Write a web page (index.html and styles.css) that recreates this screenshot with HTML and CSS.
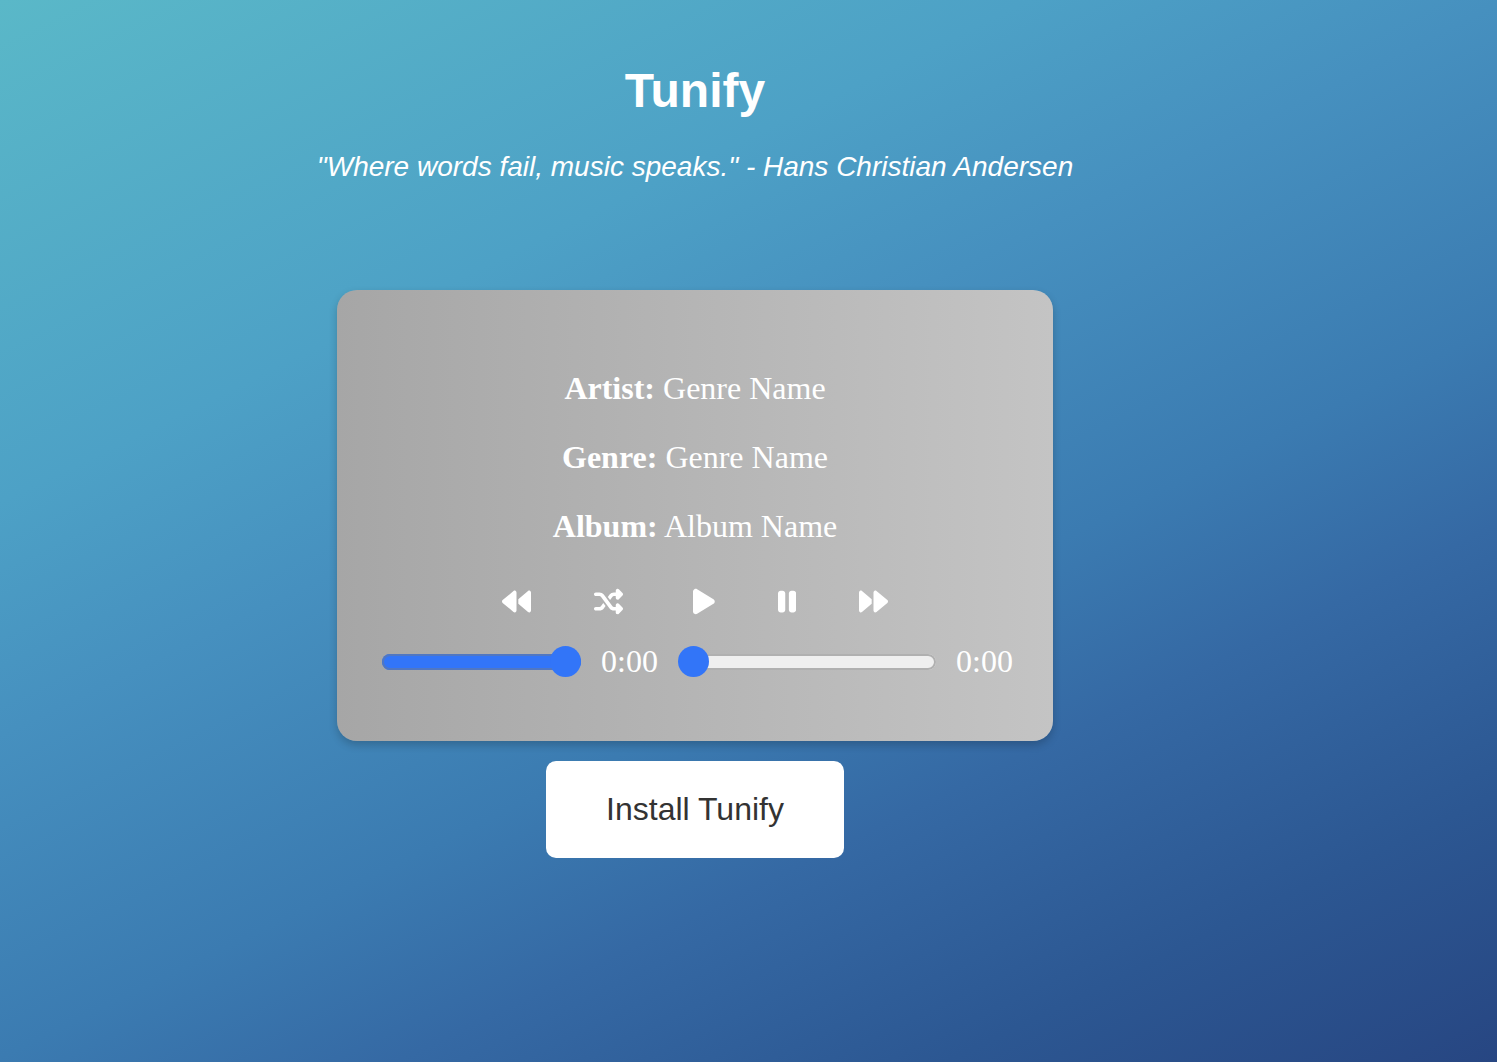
FILE: index.html
```html
<!DOCTYPE html>
<html lang="en">
<head>
<meta charset="utf-8">
<meta name="viewport" content="width=device-width, initial-scale=1">
<title>Tunify</title>
<link rel="stylesheet" href="styles.css">
</head>
<body>
<main class="page">
  <header class="intro">
    <h1 class="title">Tunify</h1>
    <p class="quote">"Where words fail, music speaks." - Hans Christian Andersen</p>
  </header>
  <section class="player" aria-label="Music player">
    <div class="details">
      <p class="detail"><strong>Artist:</strong> Genre Name</p>
      <p class="detail"><strong>Genre:</strong> Genre Name</p>
      <p class="detail"><strong>Album:</strong> Album Name</p>
    </div>
    <div class="controls">
      <div class="control-group">
        <button class="control" type="button" aria-label="Previous"><svg class="icon" viewBox="0 0 512 512"><path d="M459.5 440.6c9.5 7.9 22.8 9.7 34.1 4.4s18.4-16.6 18.4-29V96c0-12.4-7.2-23.7-18.4-29s-24.5-3.6-34.1 4.4L288 214.3V256v41.7L459.5 440.6zM256 352V256 128 96c0-12.4-7.2-23.7-18.4-29s-24.5-3.6-34.1 4.4l-192 160C4.2 237.5 0 246.5 0 256s4.2 18.5 11.5 24.6l192 160c9.5 7.9 22.8 9.7 34.1 4.4s18.4-16.6 18.4-29V352z"/></svg></button>
        <button class="control" type="button" aria-label="Shuffle"><svg class="icon" viewBox="0 0 512 512"><path d="M403.8 34.4c12-5 25.7-2.2 34.9 6.9l64 64c6 6 9.4 14.1 9.4 22.6s-3.4 16.6-9.4 22.6l-64 64c-9.2 9.2-22.9 11.9-34.9 6.9s-19.8-16.6-19.8-29.6V160H352c-10.1 0-19.6 4.7-25.6 12.8L284 229.3 244 176l31.2-41.6C293.3 110.2 321.8 96 352 96h32V64c0-12.9 7.8-24.6 19.8-29.6zM164 282.7L204 336l-31.2 41.6C154.7 401.8 126.2 416 96 416H32c-17.7 0-32-14.3-32-32s14.3-32 32-32H96c10.1 0 19.6-4.7 25.6-12.8L164 282.7zm274.6 188c-9.2 9.2-22.9 11.9-34.9 6.9s-19.8-16.6-19.8-29.6V416H352c-30.2 0-58.7-14.2-76.8-38.4L121.6 172.8c-6-8.1-15.5-12.8-25.6-12.8H32c-17.7 0-32-14.3-32-32s14.3-32 32-32H96c30.2 0 58.7 14.2 76.8 38.4L326.4 339.2c6 8.1 15.5 12.8 25.6 12.8h32V320c0-12.9 7.8-24.6 19.8-29.6s25.7-2.2 34.9 6.9l64 64c6 6 9.4 14.1 9.4 22.6s-3.4 16.6-9.4 22.6l-64 64z"/></svg></button>
      </div>
      <div class="control-group">
        <button class="control" type="button" aria-label="Play"><svg class="icon" viewBox="0 0 384 512"><path d="M73 39c-14.8-9.1-33.4-9.4-48.5-.9S0 62.6 0 80V432c0 17.4 9.4 33.4 24.5 41.9s33.7 8.1 48.5-.9L361 297c14.3-8.7 23-24.2 23-41s-8.7-32.2-23-41L73 39z"/></svg></button>
        <button class="control" type="button" aria-label="Pause"><svg class="icon" viewBox="0 0 320 512"><path d="M48 64C21.500 64 0 85.500 0 112V400c0 26.500 21.500 48 48 48H80c26.500 0 48-21.500 48-48V112c0-26.500-21.500-48-48-48H48zm192 0c-26.500 0-48 21.500-48 48V400c0 26.500 21.500 48 48 48h32c26.500 0 48-21.500 48-48V112c0-26.500-21.500-48-48-48H240z"/></svg></button>
        <button class="control" type="button" aria-label="Next"><svg class="icon" viewBox="0 0 512 512"><path d="M52.500 440.600c-9.500 7.900-22.800 9.700-34.100 4.400S0 428.400 0 416V96C0 83.600 7.200 72.300 18.400 67s24.500-3.600 34.100 4.400L224 214.300V256v41.700L52.500 440.600zM256 352V256 128 96c0-12.400 7.200-23.700 18.400-29s24.500-3.600 34.100 4.400l192 160c7.300 6.100 11.500 15.100 11.500 24.600s-4.200 18.500-11.500 24.600l-192 160c-9.500 7.900-22.800 9.700-34.100 4.400s-18.400-16.600-18.400-29V352z"/></svg></button>
      </div>
    </div>
    <div class="sliders">
      <input class="slider volume" type="range" min="0" max="100" value="100" aria-label="Volume">
      <span class="time">0:00</span>
      <input class="slider seek" type="range" min="0" max="100" value="0" aria-label="Seek">
      <span class="time">0:00</span>
    </div>
  </section>
  <button class="install" type="button">Install Tunify</button>
</main>
</body>
</html>
```
FILE: styles.css
```css
* {
  box-sizing: border-box;
}

body {
  margin: 0;
  min-height: 100vh;
  background: linear-gradient(154deg, #5ab8c8 0%, #4da1c6 28%, #4690bf 41%, #3b7bb1 59%, #3569a4 70%, #2c5792 85%, #274682 100%);
  color: #fff;
  font-family: "Liberation Serif", "Times New Roman", serif;
  font-size: 32px;
  line-height: 37px;
}

.page {
  display: flex;
  flex-direction: column;
  align-items: center;
  padding: 63px 107px 40px 0;
}

.intro {
  margin-bottom: 106px;
  font-family: "Liberation Sans", Arial, sans-serif;
  text-align: center;
}

.title {
  margin: 0 0 31px;
  font-size: 48px;
  line-height: 56px;
}

.quote {
  margin: 0;
  font-size: 28px;
  font-style: italic;
  line-height: 34px;
}

.player {
  width: 716px;
  max-width: 100%;
  padding: 80px 40px 61px;
  border-radius: 20px;
  background: linear-gradient(90deg, #a6a6a6, #c4c4c4);
  box-shadow: 0 4px 8px rgba(0, 0, 0, 0.2);
}

.details {
  display: flex;
  flex-direction: column;
  gap: 32px;
  text-align: center;
}

.detail {
  margin: 0;
}

.controls {
  display: flex;
  justify-content: center;
  gap: 70px;
  margin: 42px 0 27px;
}

.control-group {
  display: flex;
  gap: 63px;
}

.control {
  display: flex;
  padding: 0;
  border: 0;
  background: none;
  color: inherit;
  cursor: pointer;
}

.icon {
  height: 29px;
  fill: currentColor;
}

.sliders {
  display: flex;
  align-items: center;
  gap: 20px;
}

.slider {
  appearance: none;
  min-width: 0;
  height: 31px;
  margin: 0;
  background: none;
}

.volume {
  width: 199px;
  margin-left: 5px;
}

.seek {
  flex: 1;
}

.slider::-webkit-slider-runnable-track {
  height: 16px;
  border-radius: 8px;
  background: #efefef;
  box-shadow: inset 0 0 0 2px #b0b0b0;
}

.volume::-webkit-slider-runnable-track {
  background: #3275f8;
  box-shadow: inset 0 0 0 2px #5077c2;
}

.slider::-webkit-slider-thumb {
  appearance: none;
  width: 31px;
  height: 31px;
  margin-top: -8px;
  border-radius: 50%;
  background: #3275f8;
}

.install {
  margin-top: 20px;
  padding: 30px 60px;
  border: 0;
  border-radius: 10px;
  background: #fff;
  color: #333;
  font-family: "Liberation Sans", Arial, sans-serif;
  font-size: 32px;
  line-height: 37px;
  cursor: pointer;
}
```
